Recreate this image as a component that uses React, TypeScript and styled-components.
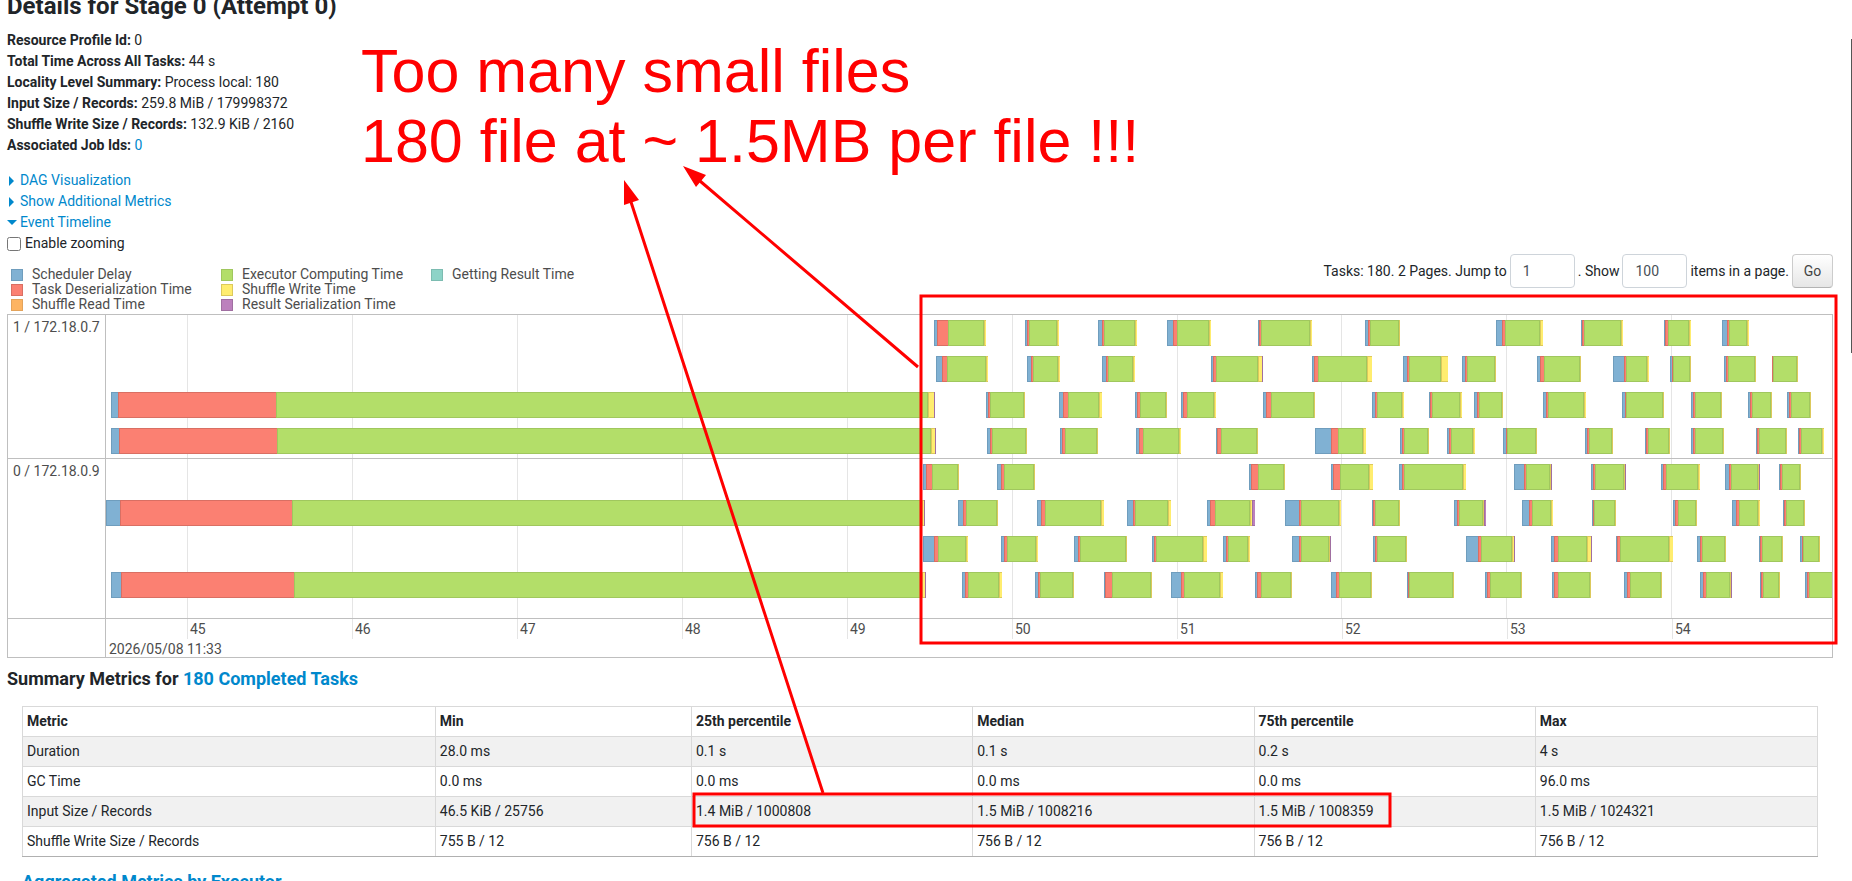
import React from 'react';
import styled, { createGlobalStyle } from 'styled-components';

const GlobalStyle = createGlobalStyle`
  *, *::before, *::after { box-sizing: border-box; }
  body {
    margin: 0;
    background: #fff;
    color: #212529;
    font: 400 14px/21px Roboto, "Liberation Sans", sans-serif;
    overflow: hidden;
  }
`;

const Page = styled.main`
  position: relative;
  height: 100vh;
  overflow: hidden;
  padding: 0 19px 0 7px;
`;

const Link = styled.a`
  color: #0088cc;
  text-decoration: none;
`;

const Title = styled.h3`
  margin: -8px 0 9px;
  font-size: 24px;
  line-height: 29px;
  font-weight: 700;
`;

const Facts = styled.ul`
  list-style: none;
  margin: 0 0 14px;
  padding: 0;
`;

const Toggles = styled.nav`
  display: flex;
  flex-direction: column;
  align-items: flex-start;
`;

const ToggleLink = styled(Link)`
  display: flex;
  align-items: center;
`;

const Caret = styled.span<{ $open?: boolean }>`
  width: 13px;
  display: flex;
  padding-left: ${(p) => (p.$open ? 0 : 2)}px;
`;

const ZoomLabel = styled.label`
  display: flex;
  align-items: center;
  gap: 4px;
  input { width: 14px; height: 14px; margin: 0; }
`;

const Controls = styled.div`
  display: flex;
  justify-content: space-between;
  align-items: flex-start;
  height: 60px;
`;

const Legend = styled.ul`
  list-style: none;
  margin: 0;
  padding: 13px 0 0 4px;
  display: grid;
  grid-template-rows: repeat(3, 15px);
  grid-auto-flow: column;
  grid-auto-columns: 210px;
  line-height: 15px;
  color: #4d4d4d;
`;

const LegendItem = styled.li`
  display: flex;
  align-items: center;
  gap: 9px;
`;

const Swatch = styled.span<{ $fill: string; $edge: string }>`
  width: 12px;
  height: 12px;
  background: ${(p) => p.$fill};
  border: 1px solid ${(p) => p.$edge};
`;

const Pager = styled.form`
  display: flex;
  align-items: center;
  gap: 3px;
`;

const PageInput = styled.input`
  width: 65px;
  height: 34px;
  padding: 6px 12px;
  border: 1px solid #ced4da;
  border-radius: 4px;
  color: #495057;
  font: inherit;
`;

const GoButton = styled.button`
  width: 41px;
  height: 34px;
  padding: 0;
  border: 1px solid #ccc;
  border-bottom-color: #b3b3b3;
  border-radius: 4px;
  background: linear-gradient(#fff, #e6e6e6);
  color: #444;
  font: inherit;
`;

const Timeline = styled.section`
  display: grid;
  grid-template-columns: 98px 1fr;
  grid-template-rows: 144px 160px 38px;
  border: 1px solid #bfbfbf;
  color: #4d4d4d;
`;

const GroupLabel = styled.div<{ $last?: boolean }>`
  border-right: 1px solid #bfbfbf;
  border-bottom: ${(p) => (p.$last ? 0 : 1)}px solid #bfbfbf;
  padding: 2px 5px;
`;

const Lanes = styled.div`
  border-bottom: 1px solid #bfbfbf;
  overflow: hidden;
  svg { display: block; width: 100%; height: 100%; }
`;

const Axis = styled.div`
  display: flex;
  flex-wrap: wrap;
  overflow: hidden;
  line-height: 21px;
`;

const Tick = styled.span<{ $first?: boolean }>`
  flex: 0 0 ${(p) => (p.$first ? (81 / 1726) * 100 : (165 / 1726) * 100)}%;
  height: 20px;
  padding-left: 2px;
  border-left: ${(p) => (p.$first ? 0 : 1)}px solid #e5e5e5;
  &:last-of-type { flex: 1 1 0; }
`;

const AxisDate = styled.span`
  flex: 0 0 100%;
  height: 18px;
  line-height: 20px;
  padding-left: 3px;
`;

const SectionTitle = styled.h4`
  margin: 10px 0 16px;
  font-size: 18px;
  line-height: 22px;
  font-weight: 700;
`;

const Indented = styled.div`
  padding: 0 15px;
`;

const MetricsTable = styled.table`
  width: 100%;
  margin-bottom: 14px;
  table-layout: fixed;
  border-collapse: collapse;
  border: 1px solid #d9d9d9;
  border-bottom-color: #b0b0b0;
  th, td {
    height: 30px;
    padding: 4px;
    text-align: left;
    border: 1px solid #d9d9d9;
  }
  th { font-weight: 700; }
  tbody tr:nth-child(odd) { background: #f1f1f1; }
  tbody tr:last-child td { border-bottom-color: #b0b0b0; }
`;

const Scrollbar = styled.div`
  position: absolute;
  right: 0;
  top: 39px;
  width: 1px;
  height: 314px;
  background: #555;
`;

const Note = styled.p`
  position: absolute;
  left: 361px;
  top: 36px;
  margin: 0;
  color: #f00;
  font: 61px/70px "Liberation Sans", Arial, sans-serif;
  white-space: nowrap;
`;

const Markup = styled.svg`
  position: absolute;
  left: 0;
  top: 0;
  width: 100%;
  height: 881px;
  pointer-events: none;
`;

const colours = {
  delay: ['#80b1d3', '#6f9dbd'],
  deserialize: ['#fb8072', '#d96f63'],
  read: ['#fdb462', '#e3a35b'],
  compute: ['#b3de69', '#a0c75e'],
  write: ['#ffed6f', '#dcc95c'],
  serialize: ['#bc80bd', '#a06fa1'],
  result: ['#8dd3c7', '#7cbcb1'],
} as const;

const phases = [colours.delay, colours.deserialize, colours.compute, colours.write, colours.serialize];

const legend: [string, readonly [string, string]][] = [
  ['Scheduler Delay', colours.delay],
  ['Task Deserialization Time', colours.deserialize],
  ['Shuffle Read Time', colours.read],
  ['Executor Computing Time', colours.compute],
  ['Shuffle Write Time', colours.write],
  ['Result Serialization Time', colours.serialize],
  ['Getting Result Time', colours.result],
];

/* A task is the list of its phase starts (delay, deserialize, compute, write, serialize) and its end. */
const groups: { name: string; height: number; lanes: number[][][] }[] = [
  {
    name: '1 / 172.18.0.7',
    height: 143,
    lanes: [
      [[828, 831, 842, 878, 880], [919, 921, 923, 951, 953], [992, 996, 998, 1029, 1031], [1061, 1067, 1071, 1103, 1105], [1152, 1153, 1155, 1204, 1206], [1259, 1262, 1264, 1293, 1294], [1390, 1396, 1399, 1434, 1437], [1475, 1476, 1478, 1515, 1517], [1558, 1559, 1562, 1583, 1585], [1616, 1621, 1623, 1641, 1643]],
      [[830, 836, 841, 880, 882], [921, 925, 927, 952, 954], [996, 1000, 1002, 1027, 1029], [1105, 1107, 1110, 1152, 1156, 1157], [1206, 1208, 1212, 1261, 1266], [1297, 1301, 1303, 1335, 1342], [1356, 1359, 1361, 1389, 1390], [1431, 1434, 1438, 1474, 1475], [1507, 1518, 1520, 1541, 1543], [1564, 1566, 1567, 1584, 1585], [1618, 1620, 1622, 1649, 1650], [1666, 1666, 1667, 1691, 1692]],
      [[5, 12, 170, 822, 828, 829], [880, 882, 884, 918, 919], [953, 957, 962, 993, 996], [1029, 1031, 1034, 1060, 1061], [1075, 1077, 1081, 1108, 1110], [1157, 1160, 1165, 1208, 1209], [1266, 1269, 1271, 1296, 1298], [1323, 1324, 1326, 1354, 1356], [1368, 1371, 1373, 1396, 1397], [1437, 1440, 1442, 1478, 1480], [1516, 1519, 1520, 1557, 1558], [1585, 1587, 1589, 1615, 1616], [1642, 1644, 1646, 1665, 1666], [1681, 1683, 1685, 1704, 1705]],
      [[5, 13, 171, 825, 829, 830], [881, 884, 886, 920, 921], [954, 956, 959, 991, 992], [1030, 1033, 1037, 1073, 1075], [1110, 1111, 1115, 1151, 1152], [1209, 1225, 1232, 1257, 1260], [1294, 1296, 1298, 1322, 1323], [1341, 1343, 1345, 1367, 1369], [1397, 1400, 1401, 1430, 1431], [1479, 1481, 1483, 1506, 1507], [1539, 1540, 1542, 1563, 1564], [1585, 1587, 1589, 1617, 1618], [1650, 1651, 1653, 1680, 1681], [1692, 1693, 1695, 1716, 1718]],
    ],
  },
  {
    name: '0 / 172.18.0.9',
    height: 159,
    lanes: [
      [[817, 820, 826, 852, 853], [891, 895, 898, 928, 929], [1143, 1145, 1152, 1178, 1179], [1225, 1227, 1234, 1263, 1267], [1293, 1296, 1298, 1357, 1360], [1408, 1418, 1420, 1444, 1445, 1446], [1485, 1487, 1489, 1518, 1519, 1520], [1555, 1557, 1560, 1592, 1594], [1619, 1623, 1625, 1652, 1653, 1654], [1673, 1674, 1676, 1694, 1695]],
      [[0, 14, 186, 816, 818, 819], [852, 857, 860, 891, 892], [931, 935, 939, 995, 998], [1021, 1027, 1029, 1062, 1065], [1101, 1104, 1109, 1144, 1146, 1149], [1179, 1193, 1195, 1233, 1235], [1266, 1267, 1269, 1293, 1294], [1348, 1351, 1353, 1377, 1378, 1380], [1416, 1423, 1426, 1445, 1447], [1486, 1487, 1488, 1509, 1510], [1567, 1569, 1572, 1590, 1591], [1626, 1630, 1633, 1652, 1654], [1677, 1678, 1680, 1698, 1699]],
      [[817, 828, 832, 860, 862], [895, 898, 901, 930, 932], [968, 972, 974, 1020, 1021], [1046, 1048, 1050, 1097, 1101], [1117, 1120, 1122, 1142, 1144], [1186, 1193, 1195, 1223, 1224, 1225], [1267, 1269, 1271, 1300, 1301], [1360, 1372, 1375, 1406, 1408, 1409], [1445, 1448, 1452, 1481, 1485, 1486], [1510, 1511, 1514, 1563, 1567], [1591, 1594, 1596, 1619, 1620], [1653, 1654, 1656, 1676, 1677], [1694, 1696, 1697, 1713, 1714]],
      [[5, 15, 188, 816, 819, 820], [856, 859, 862, 893, 896], [929, 932, 934, 967, 968], [998, 999, 1006, 1045, 1046], [1065, 1075, 1078, 1114, 1117], [1149, 1151, 1155, 1185, 1186], [1225, 1230, 1233, 1265, 1266], [1301, 1302, 1303, 1347, 1348], [1379, 1381, 1384, 1415, 1416], [1446, 1448, 1452, 1484, 1485], [1518, 1521, 1524, 1555, 1556], [1594, 1597, 1600, 1624, 1625, 1626], [1654, 1655, 1657, 1673, 1674], [1699, 1701, 1703, 1730, 1732]],
    ],
  },
];

const tickStarts = [81, 246, 411, 576, 741, 906, 1071, 1235, 1400, 1565];
const tickLabels = ['45', '46', '47', '48', '49', '50', '51', '52', '53', '54'];

const facts: [string, React.ReactNode][] = [
  ['Resource Profile Id:', '0'],
  ['Total Time Across All Tasks:', '44 s'],
  ['Locality Level Summary:', 'Process local: 180'],
  ['Input Size / Records:', '259.8 MiB / 179998372'],
  ['Shuffle Write Size / Records:', '132.9 KiB / 2160'],
  ['Associated Job Ids:', <Link href="#job-0">0</Link>],
];

const columns = ['Metric', 'Min', '25th percentile', 'Median', '75th percentile', 'Max'];
const columnWidths = ['23%', '14.27%', '15.67%', '15.67%', '15.67%', '15.72%'];
const metrics = [
  ['Duration', '28.0 ms', '0.1 s', '0.1 s', '0.2 s', '4 s'],
  ['GC Time', '0.0 ms', '0.0 ms', '0.0 ms', '0.0 ms', '96.0 ms'],
  ['Input Size / Records', '46.5 KiB / 25756', '1.4 MiB / 1000808', '1.5 MiB / 1008216', '1.5 MiB / 1008359', '1.5 MiB / 1024321'],
  ['Shuffle Write Size / Records', '755 B / 12', '756 B / 12', '756 B / 12', '756 B / 12', '756 B / 12'],
];

function ClosedCaret() {
  return (
    <Caret>
      <svg width="5" height="10" viewBox="0 0 5 10"><path d="M0 0L5 5L0 10Z" fill="#08c" /></svg>
    </Caret>
  );
}

function OpenCaret() {
  return (
    <Caret $open>
      <svg width="10" height="5" viewBox="0 0 10 5"><path d="M0 0H10L5 5Z" fill="#08c" /></svg>
    </Caret>
  );
}

function Task({ marks, y }: { marks: number[]; y: number }) {
  return (
    <g>
      {marks.slice(0, -1).map((start, i) => {
        const width = marks[i + 1] - start;
        const [fill, edge] = phases[i];
        return (
          <React.Fragment key={i}>
            <rect x={start} y={y} width={width} height={26} fill={edge} />
            {width > 1 && <rect x={start + 1} y={y + 1} width={width - 1 - (i === 2 ? 1 : 0)} height={24} fill={fill} />}
          </React.Fragment>
        );
      })}
    </g>
  );
}

function Group({ name, height, lanes }: (typeof groups)[number]) {
  return (
    <>
      <GroupLabel>{name}</GroupLabel>
      <Lanes>
        <svg viewBox={`0 0 1726 ${height}`} preserveAspectRatio="none" shapeRendering="crispEdges" role="img" aria-label={`Tasks of executor ${name}`}>
          {tickStarts.map((x) => <rect key={x} x={x} y={0} width={1} height={height} fill="#e5e5e5" />)}
          {lanes.map((tasks, lane) => tasks.map((marks) => <Task key={marks[0]} marks={marks} y={5 + lane * 36} />))}
        </svg>
      </Lanes>
    </>
  );
}

export default function App() {
  return (
    <>
      <GlobalStyle />
      <Page>
        <Title>Details for Stage 0 (Attempt 0)</Title>
        <Facts>
          {facts.map(([label, value]) => (
            <li key={label}><strong>{label}</strong> {value}</li>
          ))}
        </Facts>
        <Toggles>
          <ToggleLink href="#dag"><ClosedCaret />DAG Visualization</ToggleLink>
          <ToggleLink href="#metrics"><ClosedCaret />Show Additional Metrics</ToggleLink>
          <ToggleLink href="#timeline"><OpenCaret />Event Timeline</ToggleLink>
          <ZoomLabel><input type="checkbox" />Enable zooming</ZoomLabel>
        </Toggles>
        <Controls>
          <Legend>
            {legend.map(([label, [fill, edge]]) => (
              <LegendItem key={label}><Swatch $fill={fill} $edge={edge} />{label}</LegendItem>
            ))}
          </Legend>
          <Pager onSubmit={(e) => e.preventDefault()}>
            <label htmlFor="page">Tasks: 180. 2 Pages. Jump to</label>
            <PageInput id="page" defaultValue="1" />
            <label htmlFor="size">. Show</label>
            <PageInput id="size" defaultValue="100" />
            <span>items in a page.</span>
            <GoButton type="submit">Go</GoButton>
          </Pager>
        </Controls>
        <Timeline>
          {groups.map((group) => <Group key={group.name} {...group} />)}
          <GroupLabel $last />
          <Axis>
            <Tick $first />
            {tickLabels.map((label) => <Tick key={label}>{label}</Tick>)}
            <AxisDate as="div">2026/05/08 11:33</AxisDate>
          </Axis>
        </Timeline>
        <SectionTitle>Summary Metrics for <Link href="#tasks">180 Completed Tasks</Link></SectionTitle>
        <Indented>
          <MetricsTable>
            <colgroup>{columnWidths.map((width, i) => <col key={i} width={width} />)}</colgroup>
            <thead><tr>{columns.map((name) => <th key={name} scope="col">{name}</th>)}</tr></thead>
            <tbody>
              {metrics.map((row) => (
                <tr key={row[0]}>{row.map((cell, i) => <td key={i}>{cell}</td>)}</tr>
              ))}
            </tbody>
          </MetricsTable>
          <SectionTitle><Link href="#executors">Aggregated Metrics by Executor</Link></SectionTitle>
        </Indented>
        <Note>Too many small files<br />180 file at ~ 1.5MB per file !!!</Note>
        <Markup aria-hidden="true">
          <g fill="none" stroke="#f00" strokeWidth="3">
            <rect x="921" y="296" width="915" height="347" />
            <rect x="694" y="794" width="696" height="32" />
            <path d="M918 367L700 181M823 793L631 202" />
          </g>
          <path fill="#f00" d="M683 166L706 175L696 187ZM624 180L639 200L624 205Z" />
        </Markup>
        <Scrollbar />
      </Page>
    </>
  );
}
